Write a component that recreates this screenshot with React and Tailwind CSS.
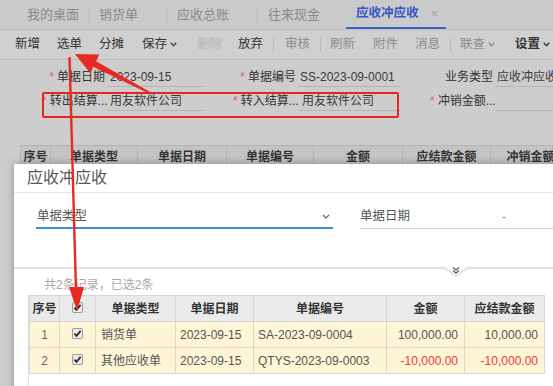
import React from "react";

const Chev = ({ color = "#444" }) => (
  <svg width="7" height="5" viewBox="0 0 7 5" className="ml-[3px] shrink-0">
    <path d="M0.8 0.8 L3.5 3.8 L6.2 0.8" fill="none" stroke={color} strokeWidth="1.3" />
  </svg>
);

const Check = () => (
  <svg width="11" height="11" viewBox="0 0 11 11" className="inline-block">
    <rect x="0.5" y="0.5" width="10" height="10" rx="1.5" fill="#ececec" stroke="#9a9a9a" />
    <path d="M2.4 5.6 L4.5 7.9 L8.6 2.9" fill="none" stroke="#2a2a2a" strokeWidth="1.8" />
  </svg>
);

const Sep = ({ ml }) => <span className={`${ml} w-px h-[14px] bg-[#b9b9b9] shrink-0`} />;

function Field({ star, label, value, lw, vw, gap, start, valuePad = "pl-[2px]" }) {
  return (
    <div className={`flex items-center shrink-0 ${start}`}>
      <div className={`${lw} text-right text-[12px] text-[#333] whitespace-nowrap`}>
        {star && <span className="text-[#d66] mr-[3px]">*</span>}
        {label}
      </div>
      <div
        className={`${gap} ${vw} h-[20px] border-b border-[#b5b5b5] flex items-center ${valuePad} text-[12px] text-[#3a3a3a] whitespace-nowrap overflow-hidden`}
      >
        {value}
      </div>
    </div>
  );
}

export default function App() {
  return (
    <div className="relative w-[553px] h-[386px] overflow-hidden bg-[#cdcdcd] font-['Liberation_Sans','Noto_Sans_CJK_SC',sans-serif]">
      {/* Tab bar */}
      <div className="h-[30px] bg-[#cacaca] flex items-center text-[13px] text-[#8a8a8a] border-b border-[#bfbfbf]">
        <span className="ml-[27px] shrink-0">我的桌面</span>
        <span className="ml-[10px] w-px h-[16px] bg-[#bdbdbd] shrink-0" />
        <span className="ml-[9px] shrink-0">销货单</span>
        <span className="ml-[28px] w-px h-[16px] bg-[#bdbdbd] shrink-0" />
        <span className="ml-[10px] shrink-0">应收总账</span>
        <span className="ml-[28px] w-px h-[16px] bg-[#bdbdbd] shrink-0" />
        <span className="ml-[10px] shrink-0">往来现金</span>
        <div className="ml-[26px] w-[100px] h-full flex items-center pl-[10px] border-b-2 border-[#3b5fc9] shrink-0">
          <span className="text-[#3458c8] text-[12.5px] font-semibold">应收冲应收</span>
          <span className="ml-[12px] text-[#a0a0a0] text-[13px]">×</span>
        </div>
      </div>

      {/* Toolbar */}
      <div className="h-[30px] bg-[#d0d0d0] flex items-center text-[12.5px] text-[#333] border-b border-[#bdbdbd]">
        <span className="ml-[15px] w-[25px] shrink-0">新增</span>
        <span className="ml-[17px] w-[25px] shrink-0">选单</span>
        <span className="ml-[17px] w-[25px] shrink-0">分摊</span>
        <span className="ml-[18px] w-[35px] shrink-0 flex items-center">保存<Chev /></span>
        <span className="ml-[20px] w-[25px] shrink-0 text-[#b3b3b3]">删除</span>
        <span className="ml-[16px] w-[25px] shrink-0">放弃</span>
        <Sep ml="ml-[10px]" />
        <span className="ml-[11px] w-[25px] shrink-0 text-[#8d8d8d]">审核</span>
        <Sep ml="ml-[10px]" />
        <span className="ml-[9px] w-[25px] shrink-0 text-[#8d8d8d]">刷新</span>
        <span className="ml-[18px] w-[25px] shrink-0 text-[#8d8d8d]">附件</span>
        <span className="ml-[17px] w-[25px] shrink-0 text-[#8d8d8d]">消息</span>
        <Sep ml="ml-[10px]" />
        <span className="ml-[9px] w-[35px] shrink-0 flex items-center text-[#8d8d8d]">联查<Chev color="#8d8d8d" /></span>
        <span className="ml-[20px] w-[35px] shrink-0 flex items-center font-semibold">设置<Chev color="#333" /></span>
      </div>

      {/* Form */}
      <div className="pt-[7px] flex flex-col gap-[4px]">
        <div className="flex">
          <Field star label="单据日期" value="2023-09-15" lw="w-[63px]" vw="w-[98px]" gap="ml-[2px]" start="ml-[42px]" valuePad="pl-[3px]" />
          <Field star label="单据编号" value="SS-2023-09-0001" lw="w-[63px]" vw="w-[102px]" gap="ml-[2px]" start="ml-[28px]" />
          <Field label="业务类型" value="应收冲应收" lw="w-[63px]" vw="w-[80px]" gap="ml-[2px]" start="ml-[30px]" />
        </div>
        <div className="flex">
          <Field star label="转出结算..." value="用友软件公司" lw="w-[63px]" vw="w-[98px]" gap="ml-[2px]" start="ml-[42px]" valuePad="pl-[3px]" />
          <Field star label="转入结算..." value="用友软件公司" lw="w-[63px]" vw="w-[102px]" gap="ml-[2px]" start="ml-[28px]" valuePad="pl-[4px]" />
          <Field star label="冲销金额..." value="" lw="w-[63px]" vw="w-[80px]" gap="ml-[2px]" start="ml-[30px]" />
        </div>
      </div>

      {/* Background grid header */}
      <div className="mt-[34px] ml-[20px] h-[24px] flex bg-[#c4c4c4] border border-[#b3b3b3] text-[12px] text-[#333] font-semibold">
        {[
          ["序号", "w-[30px]"],
          ["单据类型", "w-[87px]"],
          ["单据日期", "w-[89px]"],
          ["单据编号", "w-[87px]"],
          ["金额", "w-[89px]"],
          ["应结款金额", "w-[88px]"],
          ["冲销金额", "w-[80px]"],
        ].map(([t, w], i) => (
          <div key={i} className={`${w} shrink-0 flex items-center justify-center border-r border-[#b3b3b3]`}>
            {t}
          </div>
        ))}
      </div>

      {/* Red annotation box */}
      <div className="absolute left-[42px] top-[92px] w-[357px] h-[26px] border-2 border-[#e3261f] rounded-[2px]" />

      {/* Dialog */}
      <div className="absolute left-[14px] top-[164px] w-[560px] h-[240px] bg-white shadow-[0_0_8px_rgba(0,0,0,0.3)] flex flex-col">
        <div className="h-[29px] shrink-0 border-b border-[#e6e6e6] flex items-center pl-[13px] text-[16px] text-[#555]">
          应收冲应收
        </div>
        <div className="h-[74px] shrink-0 pt-[12px] flex items-start">
          <div className="ml-[22px] w-[297px] h-[24px] border-b-2 border-[#3d8ae0] flex items-center justify-between pl-[1px] pr-[3px]">
            <span className="text-[12.5px] text-[#555]">单据类型</span>
            <svg width="8" height="5" viewBox="0 0 8 5">
              <path d="M1 1 L4 4 L7 1" fill="none" stroke="#666" strokeWidth="1.2" />
            </svg>
          </div>
          <div className="ml-[27px] flex-1 h-[24px] border-b border-[#d4d4d4] flex items-center">
            <span className="text-[12.5px] text-[#555]">单据日期</span>
            <span className="ml-[92px] text-[12px] text-[#888]">-</span>
          </div>
        </div>
        <div className="relative h-[2px] shrink-0 bg-[#e3e3e3]">
          <svg width="30" height="12" viewBox="0 0 30 12" className="absolute left-[428px] top-[-1px]">
            <path d="M0 0.5 L14 9.5 L28 0.5" fill="white" stroke="#dcdcdc" strokeWidth="1.5" />
            <rect x="0" y="-2" width="28" height="2.2" fill="white" />
            <path d="M11 1.5 L14 4 L17 1.5 M11 4.5 L14 7 L17 4.5" fill="none" stroke="#555" strokeWidth="1.1" />
          </svg>
        </div>
        <div className="mt-[8px] pl-[30px] h-[16px] leading-[16px] text-[12px] text-[#a8a8a8]">
          共2条记录，已选2条
        </div>
        <div className="mt-[2px] ml-[14px] border-l border-[#dedede] h-[100px]">
          <table className="w-[515px] table-fixed border-collapse text-[12px]">
            <colgroup>
              <col className="w-[30px]" />
              <col className="w-[36px]" />
              <col className="w-[80px]" />
              <col className="w-[78px]" />
              <col className="w-[133px]" />
              <col className="w-[78px]" />
              <col className="w-[80px]" />
            </colgroup>
            <thead>
              <tr className="h-[26px] bg-[#eaeaea] text-[#333] font-semibold">
                <th className="border border-[#d6d6d6] text-center font-semibold">序号</th>
                <th className="border border-[#d6d6d6] text-center">
                  <span className="inline-flex pt-[2px]"><Check /></span>
                </th>
                <th className="border border-[#d6d6d6] text-center font-semibold">单据类型</th>
                <th className="border border-[#d6d6d6] text-center font-semibold">单据日期</th>
                <th className="border border-[#d6d6d6] text-center font-semibold">单据编号</th>
                <th className="border border-[#d6d6d6] text-center font-semibold">金额</th>
                <th className="border border-[#d6d6d6] text-center font-semibold">应结款金额</th>
              </tr>
            </thead>
            <tbody className="text-[#555]">
              {[
                ["1", "销货单", "2023-09-15", "SA-2023-09-0004", "100,000.00", "10,000.00", false],
                ["2", "其他应收单", "2023-09-15", "QTYS-2023-09-0003", "-10,000.00", "-10,000.00", true],
              ].map(([n, t, d, no, a, b, neg]) => (
                <tr key={n} className="h-[26px] bg-[#fdf5d6]">
                  <td className="border border-[#dcd8c8] text-center text-[#666]">{n}</td>
                  <td className="border border-[#dcd8c8] text-center">
                    <span className="inline-flex pt-[2px]"><Check /></span>
                  </td>
                  <td className="border border-[#dcd8c8] pl-[5px] whitespace-nowrap">{t}</td>
                  <td className="border border-[#dcd8c8] pl-[4px] whitespace-nowrap">{d}</td>
                  <td className="border border-[#dcd8c8] pl-[4px] whitespace-nowrap">{no}</td>
                  <td className={`border border-[#dcd8c8] text-right pr-[6px] whitespace-nowrap ${neg ? "text-[#f03a3a]" : ""}`}>{a}</td>
                  <td className={`border border-[#dcd8c8] text-right pr-[6px] whitespace-nowrap ${neg ? "text-[#f03a3a]" : ""}`}>{b}</td>
                </tr>
              ))}
            </tbody>
          </table>
        </div>
      </div>

      {/* Arrow annotations */}
      <svg className="absolute inset-0 pointer-events-none" width="553" height="386" viewBox="0 0 553 386">
        {/* diagonal arrow to 选单 */}
        <polygon
          points="75,54 99.5,54.5 96,61.2 150.6,92.2 149.4,93.8 93,66.8 90.5,73.5"
          fill="#e62a22"
        />
        {/* vertical arrow to checkbox */}
        <polygon points="68.3,57 70.7,57 77.2,290 74.8,290" fill="#e62a22" />
        <polygon points="69,287 84,287 77,311" fill="#e62a22" />
      </svg>
    </div>
  );
}
